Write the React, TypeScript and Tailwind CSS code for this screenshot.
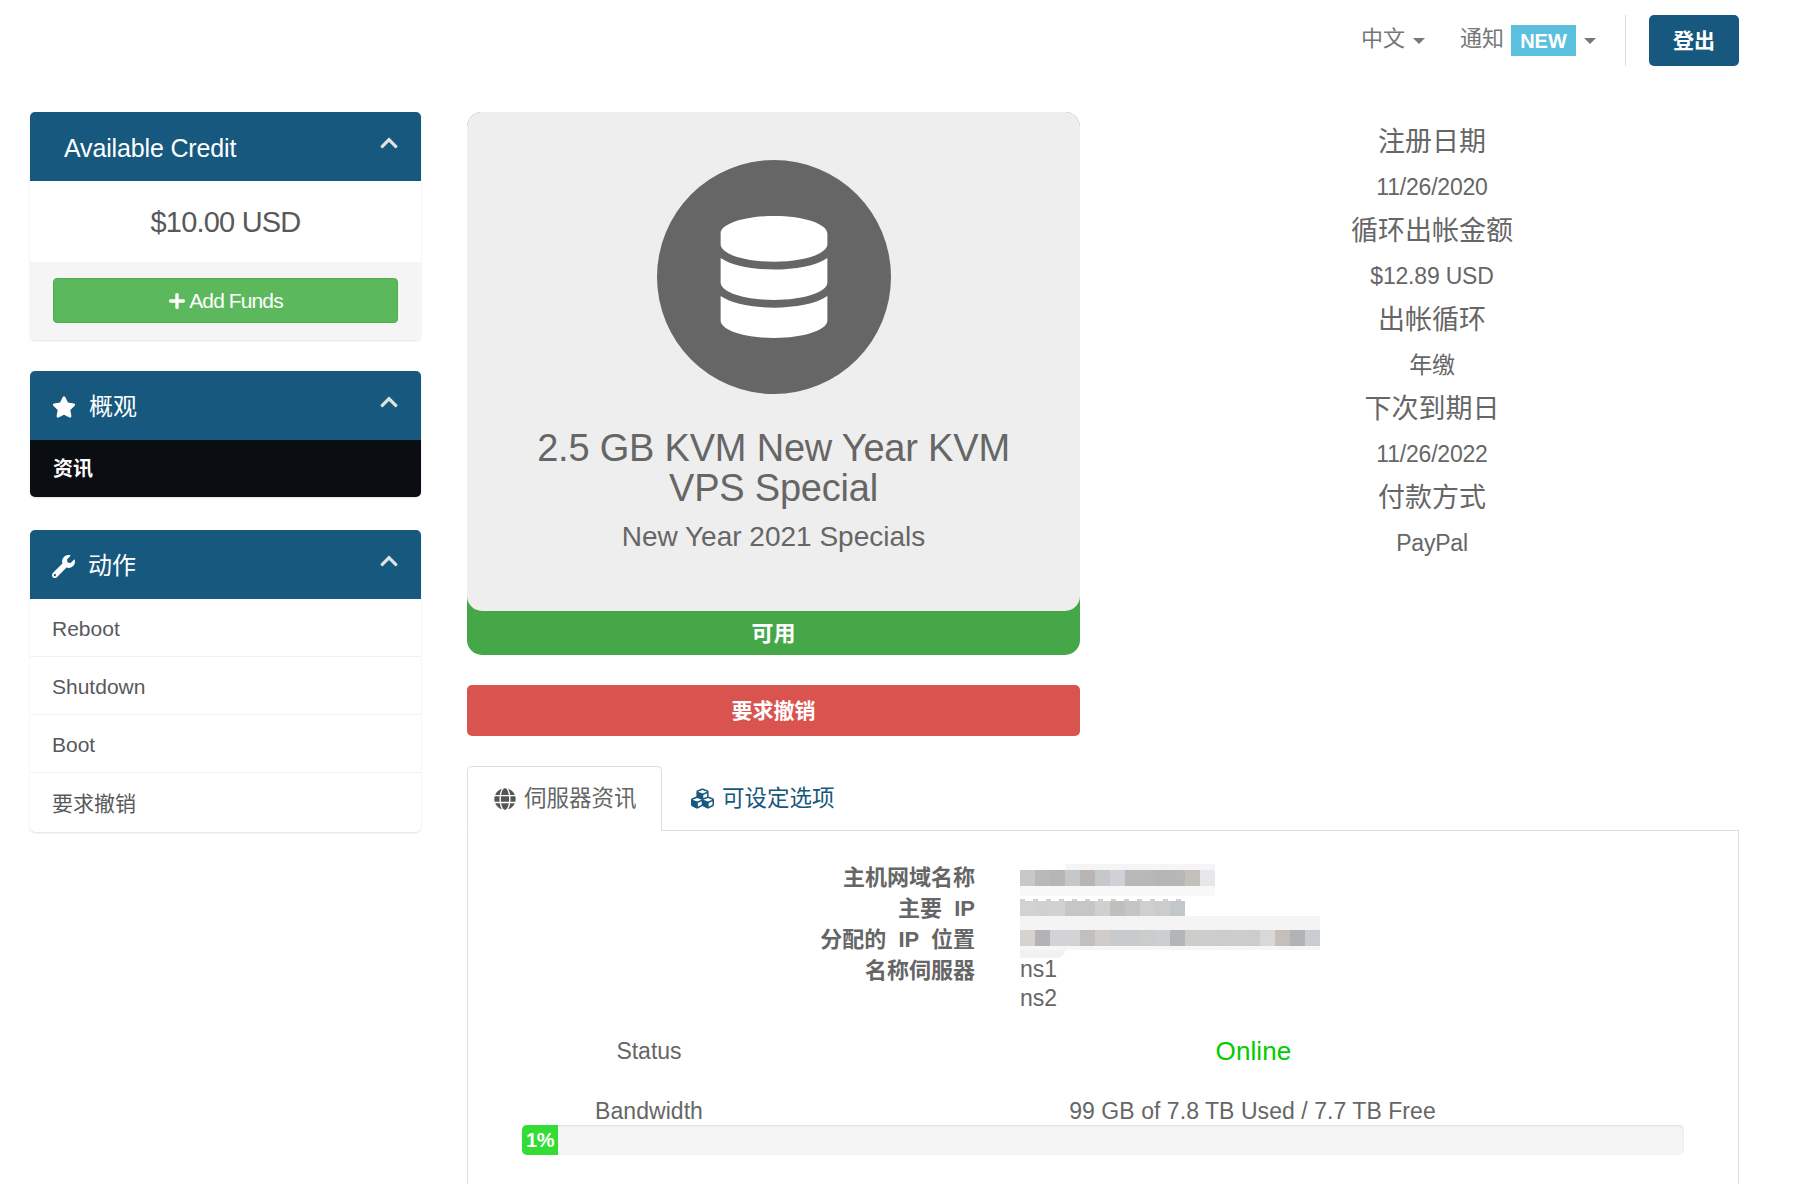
import { FaChevronUp, FaCubes, FaDatabase, FaGlobe, FaPlus, FaStar, FaWrench } from "react-icons/fa";

const FONT = "font-['Liberation_Sans','Noto_Sans_CJK_SC',sans-serif]";

// pixelated patches that hide the server address in the reference
const HOST_CELLS = ["#c9c8c9", "#b9b9ba", "#b7b6b4", "#c6c7c8", "#b9b5b2", "#c6c8ca", "#d0d1d8", "#b9b9ba", "#b7b8b9", "#b8b6b4", "#b8b7b7", "#c4c0bc", "#e6e7eb"];
const IP_CELLS = ["#d2d2d2", "#cfd0d0", "#d0d1d0", "#c6c6c6", "#c6c6c5", "#cfd0cf", "#bfbfbc", "#c3c5c6", "#cfcfcd", "#cccccb", "#c2c8ca"];
const ALLOC_CELLS = ["#d6d2cf", "#b3b2b5", "#d3d3d5", "#d3d3d5", "#c0c0bf", "#cfccc9", "#c9cacc", "#c9cacc", "#cbcccc", "#cdcecf", "#b3b6b6", "#cecdcb", "#cdcdcd", "#cccccc", "#cdcdcd", "#cccccc", "#d8d8d8", "#c4bfbb", "#b3b3b5", "#c9cdd2"];

function Mosaic({ cells }: { cells: string[] }) {
  return (
    <div className="flex h-[16px]">
      {cells.map((color, i) => (
        <div key={i} className="h-full w-[15px]" style={{ backgroundColor: color }} />
      ))}
    </div>
  );
}

function PanelHeading({ icon, title, pl = "pl-[22px]" }: { icon?: React.ReactNode; title: string; pl?: string }) {
  return (
    <div className={`relative flex h-[69px] items-center gap-[13px] rounded-t-[5px] bg-[#16587e] pt-[3px] text-white ${pl}`}>
      {icon}
      {title}
      <FaChevronUp className="absolute top-[21px] right-[22px] text-[20px] text-[#e2e2e2]" />
    </div>
  );
}

function InfoRow({ label, children }: { label: string; children?: React.ReactNode }) {
  return (
    <div className="grid grid-cols-[453px_1fr] gap-x-[45px] text-[22px] leading-[31px]">
      <div className="text-right font-bold whitespace-pre text-[#666]">{label}</div>
      <div className="relative min-h-[31px]">{children}</div>
    </div>
  );
}

function SideLink({ label, last }: { label: string; last?: boolean }) {
  return (
    <div className={`flex items-center px-[22px] pt-[2px] text-[21px] text-[#58595b] ${last ? "h-[59px]" : "h-[58px] border-b border-[#f2f2f2]"}`}>{label}</div>
  );
}

function Sidebar() {
  return (
    <aside className="flex w-[391px] shrink-0 flex-col">
      <section className="mb-[31px] rounded-[5px] bg-white shadow-[0_1px_2px_rgba(0,0,0,0.12)]">
        <PanelHeading title="Available Credit" pl="pl-[34px] pt-[4px] text-[25px] tracking-[-0.15px]" />
        {/* tracking: the reference's latin is tall and tight */}
        <div className="flex h-[81px] items-center justify-center pt-[3px] text-[29px] tracking-[-0.8px] text-[#58595b]">$10.00 USD</div>
        <div className="h-[78px] rounded-b-[5px] bg-[#f5f5f5] px-[23px] pt-[16px]">
          <button className="flex h-[45px] w-full items-center justify-center gap-[3px] rounded-[4px] border border-[#4cae4c] bg-[#5cb85c] pt-[1px] text-[21px] tracking-[-0.9px] text-white">
            <FaPlus className="text-[18px]" />
            Add Funds
          </button>
        </div>
      </section>

      <section className="mb-[33px] rounded-[5px] shadow-[0_1px_2px_rgba(0,0,0,0.12)]">
        <PanelHeading icon={<FaStar className="text-[24px]" />} title="概观" />
        <div className="flex h-[57px] items-center rounded-b-[5px] bg-[#0a0d12] px-[23px] pt-[1px] text-[20px] font-bold text-white">资讯</div>
      </section>

      <section className="rounded-[5px] bg-white shadow-[0_1px_2px_rgba(0,0,0,0.12)]">
        <PanelHeading icon={<FaWrench className="text-[23px]" />} title="动作" />
        <SideLink label="Reboot" />
        <SideLink label="Shutdown" />
        <SideLink label="Boot" />
        <SideLink label="要求撤销" last />
      </section>
    </aside>
  );
}

function ProductCard() {
  return (
    <div className="w-[613px] shrink-0">
      <div className="rounded-[15px] bg-[#46a748]">
        <div className="flex h-[499px] flex-col items-center rounded-[15px] bg-[#eeeeee] pt-[48px] text-[#666]">
          <div className="flex h-[234px] w-[234px] items-center justify-center rounded-full bg-[#666]">
            <FaDatabase className="text-[122px] text-white" />
          </div>
          <h3 className="mt-[34px] w-[520px] text-center text-[38px] leading-[40px] tracking-[-0.2px] font-normal">2.5 GB KVM New Year KVM VPS Special</h3>
          <div className="mt-[9px] text-[28px] leading-[40px]">New Year 2021 Specials</div>
        </div>
        <div className="flex h-[44px] items-center justify-center pt-[1px] text-[22px] font-bold text-white">可用</div>
      </div>
      <button className="mt-[30px] flex h-[51px] w-full items-center justify-center rounded-[5px] bg-[#d9534f] pt-[1px] text-[21px] font-bold text-white">要求撤销</button>
    </div>
  );
}

function BillingInfo() {
  const rows = [
    ["注册日期", "11/26/2020"],
    ["循环出帐金额", "$12.89 USD"],
    ["出帐循环", "年缴"],
    ["下次到期日", "11/26/2022"],
    ["付款方式", "PayPal"],
  ];
  return (
    <div className="flex-1 pt-[8px] text-center text-[#666]">
      {rows.map(([label, value]) => (
        <div key={label}>
          <div className="flex h-[45px] items-center justify-center text-[27px]">{label}</div>
          <div className="flex h-[44px] items-center justify-center text-[23px] tracking-[-0.2px]">{value}</div>
        </div>
      ))}
    </div>
  );
}

function ServerTabs() {
  return (
    <div>
      <div className="flex h-[65px] border-b border-[#ddd]">
        <div className="-mb-px flex w-[195px] items-center gap-[8px] rounded-t-[5px] border border-[#ddd] border-b-white bg-white pt-[1px] pl-[26px] text-[22.5px] text-[#666]">
          <FaGlobe className="text-[22px] text-[#555]" />
          伺服器资讯
        </div>
        <div className="flex items-center gap-[8px] pt-[1px] pl-[29px] text-[22.5px] text-[#16587e]">
          <FaCubes className="text-[23px]" />
          可设定选项
        </div>
      </div>
      <div className="h-[400px] border-x border-[#ddd] px-[54px] pt-[31px]">
        <InfoRow label="主机网域名称">
          <div className="absolute top-[2px] left-[45px] h-[6px] w-[150px] bg-[#f5f5f5]" />
          <div className="absolute top-[8px] left-0"><Mosaic cells={HOST_CELLS} /></div>
          <div className="absolute top-[24px] left-0 h-[10px] w-[195px] bg-[#f8f8f8]" />
        </InfoRow>
        <InfoRow label="主要  IP">
          <div className="absolute top-[6px] left-0 h-[2px] w-[165px] bg-[repeating-linear-gradient(90deg,#888_0,#888_5px,transparent_5px,transparent_13px)] opacity-40" />
          <div className="absolute top-[8px] left-0"><Mosaic cells={IP_CELLS} /></div>
          <div className="absolute top-[23px] left-0 h-[15px] w-[300px] bg-[#f4f4f4]" />
        </InfoRow>
        <InfoRow label="分配的  IP  位置">
          <div className="absolute top-[6px] left-0"><Mosaic cells={ALLOC_CELLS} /></div>
          <div className="absolute top-[22px] left-0 h-[4px] w-[300px] bg-[#f6f6f6]" />
          <div className="absolute top-[26px] left-0 h-[8px] w-[45px] rounded-br-[10px] bg-[#f1f1f1]" />
        </InfoRow>
        <InfoRow label="名称伺服器">
          <div className="text-[23px] leading-[29px] text-[#666]">
            <div>ns1</div>
            <div>ns2</div>
          </div>
        </InfoRow>
        <div className="mt-[18px] grid grid-cols-[254px_1fr] text-center text-[23px] text-[#666]">
          <div className="flex h-[40px] items-center justify-center">Status</div>
          <div className="flex h-[40px] items-center justify-center pl-[47px] text-[26px] tracking-[0.1px] text-[#00cc00]">Online</div>
        </div>
        <div className="mt-[25px] grid grid-cols-[254px_1fr] text-center text-[23px] leading-[30px] tracking-[0.05px] text-[#666]">
          <div>Bandwidth</div>
          <div className="pl-[45px]">99 GB of 7.8 TB Used / 7.7 TB Free</div>
        </div>
        <div className="-mt-px h-[30px] rounded-[5px] bg-[#f5f5f5] shadow-[inset_0_1px_2px_rgba(0,0,0,0.1)]">
          <div className="flex h-full w-[36px] items-center justify-center rounded-l-[5px] bg-[#33dd33] text-[20px] tracking-[-0.5px] font-bold text-white">1%</div>
        </div>
      </div>
    </div>
  );
}

export default function App() {
  return (
    <div className={`h-[1184px] w-[1818px] overflow-hidden bg-white ${FONT}`}>
      <header className="flex h-[112px] items-start justify-end pt-[15px] pr-[79px]">
        <div className="flex h-[51px] items-center text-[22px] text-[#777]">
          <span className="pb-[5px]">中文</span>
          <span className="ml-[8px] border-x-[6px] border-t-[6px] border-x-transparent border-t-[#777]" />
          <span className="ml-[35px] pb-[5px]">通知</span>
          <span className="ml-[7px] flex h-[31px] w-[65px] items-center justify-center bg-[#5bc0de] text-[20px] font-bold text-white">NEW</span>
          <span className="ml-[8px] border-x-[6px] border-t-[6px] border-x-transparent border-t-[#777]" />
          <span className="mr-[23px] ml-[29px] h-[51px] w-px bg-[#ddd]" />
          <button className="h-[51px] w-[90px] rounded-[5px] bg-[#16587e] pt-[1px] text-[21px] font-bold text-white">登出</button>
        </div>
      </header>
      <div className="flex gap-[46px] pl-[30px] text-[24px]">
        <Sidebar />
        <main className="w-[1272px]">
          <div className="flex gap-[45px]">
            <ProductCard />
            <BillingInfo />
          </div>
          <div className="mt-[30px]">
            <ServerTabs />
          </div>
        </main>
      </div>
    </div>
  );
}
